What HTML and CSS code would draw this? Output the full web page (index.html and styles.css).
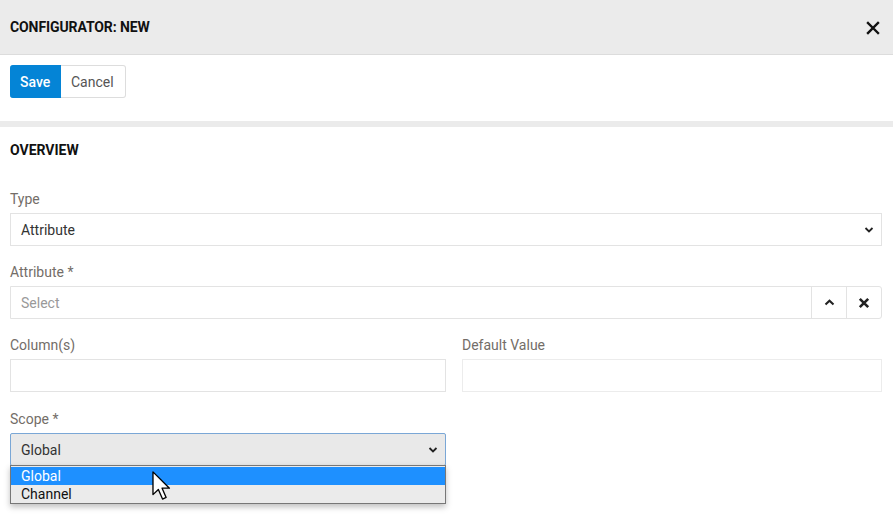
FILE: index.html
```html
<!DOCTYPE html>
<html lang="en">
<head>
    <meta charset="UTF-8">
    <title>Configurator: New</title>
    <link rel="stylesheet" href="styles.css">
</head>
<body>
    <div class="header">
        <h1>CONFIGURATOR: NEW</h1>
        <span class="close">
            <svg width="14" height="14" viewBox="0 0 14 14"><path d="M2 2L12 12M12 2L2 12" stroke="#111" stroke-width="2.4" stroke-linecap="square"/></svg>
        </span>
    </div>

    <div class="toolbar">
        <div class="btn-group">
            <button class="btn primary">Save</button>
            <button class="btn">Cancel</button>
        </div>
    </div>

    <div class="panel">
        <h2>OVERVIEW</h2>

        <div class="form-group">
            <label>Type</label>
            <div class="select">
                <span>Attribute</span>
                <svg class="caret" width="10" height="6" viewBox="0 0 10 6"><path d="M1.5 1L5 4.5L8.5 1" fill="none" stroke="#222" stroke-width="1.8"/></svg>
            </div>
        </div>

        <div class="form-group">
            <label>Attribute *</label>
            <div class="combo">
                <span class="placeholder">Select</span>
                <span class="combo-btn">
                    <svg width="11" height="7" viewBox="0 0 11 7"><path d="M1.5 5.5L5.5 1.8L9.5 5.5" fill="none" stroke="#222" stroke-width="2.1"/></svg>
                </span>
                <span class="combo-btn">
                    <svg width="12" height="12" viewBox="0 0 12 12"><path d="M1.8 1.8L10.2 10.2M10.2 1.8L1.8 10.2" stroke="#222" stroke-width="2.6"/></svg>
                </span>
            </div>
        </div>

        <div class="row">
            <div class="form-group half">
                <label>Column(s)</label>
                <div class="input"></div>
            </div>
            <div class="form-group rest">
                <label>Default Value</label>
                <div class="input light"></div>
            </div>
        </div>

        <div class="form-group half">
            <label>Scope *</label>
            <div class="dropdown">
                <div class="select open">
                    <span>Global</span>
                    <svg class="caret" width="10" height="6" viewBox="0 0 10 6"><path d="M1.5 1L5 4.5L8.5 1" fill="none" stroke="#222" stroke-width="1.8"/></svg>
                </div>
                <ul class="options">
                    <li class="active">Global</li>
                    <li>Channel</li>
                </ul>
                <svg class="cursor" width="19" height="29" viewBox="0 0 12.6 19.4"><path d="M0.6 0.6V15.8L4.2 12.4L7 18.8L9.4 17.7L6.7 11.5H11.6Z" fill="#fff" stroke="#000" stroke-width="0.9" stroke-linejoin="round"/></svg>
            </div>
        </div>
    </div>
</body>
</html>
```

FILE: styles.css
```css
html, body {
    min-height: 100%;
}
body {
    margin: 0;
    min-height: 522px;
    font-family: Roboto, "Liberation Sans", sans-serif;
    font-size: 14px;
    color: #333;
    background: #fff;
}
.header {
    height: 54px;
    background: #ebebeb;
    border-bottom: 1px solid #dcdcdc;
    display: flex;
    align-items: center;
    justify-content: space-between;
    padding: 0 13px 0 10px;
}
.header h1 {
    margin: 0;
    font-size: 14px;
    font-weight: 700;
    color: #111;
    letter-spacing: -0.1px;
}
.close {
    display: flex;
    margin-top: 1px;
}
.toolbar {
    height: 72px;
    padding: 10px;
    box-sizing: border-box;
    border-bottom: 6px solid #ebebeb;
}
.btn-group {
    display: flex;
}
.btn {
    height: 33px;
    font-family: inherit;
    font-size: 14px;
    border: 1px solid #ddd;
    background: #fff;
    color: #555;
    padding: 0 11px 0 10px;
    border-radius: 0 3px 3px 0;
    border-left: none;
}
.btn.primary {
    background: #0484d6;
    border-color: #0484d6;
    color: #fff;
    font-weight: 500;
    border-radius: 3px 0 0 3px;
    padding: 0 10px;
    width: 51px;
}
.panel {
    padding: 0 11px 0 10px;
}
.panel h2 {
    margin: 0;
    padding: 15px 0 0;
    height: 62px;
    line-height: 17px;
    box-sizing: border-box;
    font-size: 14px;
    font-weight: 700;
    color: #111;
}
.form-group {
    margin-bottom: 16px;
}
label {
    display: block;
    color: #736d68;
    line-height: 20px;
    margin-bottom: 4px;
}
.select, .combo, .input {
    height: 33px;
    box-sizing: border-box;
    border: 1px solid #e3e3e3;
    display: flex;
    align-items: center;
    padding-left: 10px;
    background: #fff;
}
.select {
    justify-content: space-between;
    padding-right: 7px;
}
.combo {
    padding-right: 0;
    border-radius: 0 3px 3px 0;
}
.placeholder {
    color: #999;
    flex: 1;
}
.combo-btn {
    width: 34px;
    height: 31px;
    border-left: 1px solid #e3e3e3;
    display: flex;
    align-items: center;
    justify-content: center;
}
.row {
    display: flex;
    gap: 16px;
    margin-bottom: 1px;
}
.half {
    width: 436px;
}
.rest {
    flex: 1;
}
.input.light {
    border-color: #ececec;
}
.dropdown {
    position: relative;
}
.select.open {
    background: #e9e9e9;
    border-color: #7aa7d6;
    border-radius: 2px;
}
.options {
    position: absolute;
    left: 0;
    right: 0;
    top: 32px;
    margin: 0;
    padding: 1px 0 0;
    list-style: none;
    background: #ebebeb;
    border: 1px solid #777;
    box-shadow: 0 3px 6px rgba(0,0,0,0.25);
}
.options li {
    height: 18px;
    line-height: 18px;
    padding-left: 10px;
    color: #111;
}
.options li.active {
    background: #1e90ff;
    color: #fff;
}
.cursor {
    position: absolute;
    left: 142px;
    top: 38px;
}
```
